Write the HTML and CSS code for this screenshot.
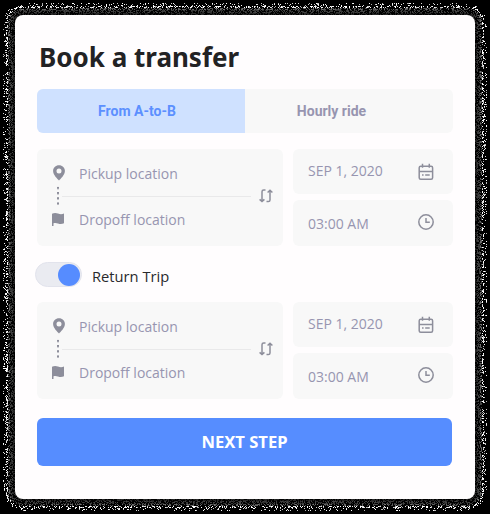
FILE: index.html
```html
<!DOCTYPE html>
<html lang="en">
<head>
<meta charset="utf-8">
<title>Book a transfer</title>
<link rel="stylesheet" href="styles.css">
</head>
<body>
<canvas class="grain" width="490" height="514"></canvas>
<svg class="sprite" aria-hidden="true">
  <symbol id="pin" viewBox="0 0 12 16"><path fill-rule="evenodd" d="M6 .2C2.600.2.1 2.700.1 6c0 3.900 4.400 8 5.900 9.400C7.500 14 11.900 9.900 11.900 6 11.900 2.700 9.400.2 6 .2zM6 3.400a2.500 2.500 0 1 1 0 5 2.500 2.500 0 0 1 0-5z"/></symbol>
  <symbol id="flag" viewBox="0 0 12 13"><path d="M0 .8C2.200-.2 4.200 0 6 .6c2 .7 4 .7 6 0v9.600c-2 .9-4 .9-6 .2-1.700-.6-3-.7-4.500-.2V13H0z"/></symbol>
  <symbol id="swap" viewBox="0 0 14 14"><path d="M6.500 1.100H4.700Q3 1.100 3 2.800v9.500M.6 10.400 3 12.600l2.400-2.200M7.500 12.600h1.800q1.700 0 1.700-1.700V1.500M8.600 3.500 11 1.200l2.400 2.300"/></symbol>
  <symbol id="calendar" viewBox="0 0 16 18"><rect x="1.200" y="3.200" width="13.400" height="13" rx="1.500"/><path d="M4.500.8v4M11.300.8v4M1.200 8.600h13.400M4 11.900h1.600M7.200 11.900h4.500"/></symbol>
  <symbol id="clock" viewBox="0 0 16 16"><circle cx="8" cy="8" r="7.200"/><path d="M8 4v4.300h3.800"/></symbol>
</svg>
<main class="card">
  <h1 class="title">Book a transfer</h1>
  <div class="tabs">
    <div class="tab tab-active">From A-to-B</div>
    <div class="tab">Hourly ride</div>
  </div>
  <section class="trip">
    <div class="route">
      <div class="stop"><svg class="pin"><use href="#pin"/></svg><span>Pickup location</span></div>
      <div class="between"><i class="dots"></i><i class="rule"></i><svg class="swap"><use href="#swap"/></svg></div>
      <div class="stop"><svg class="flag"><use href="#flag"/></svg><span>Dropoff location</span></div>
    </div>
    <div class="when">
      <div class="field date"><span>SEP 1, 2020</span><svg class="calendar"><use href="#calendar"/></svg></div>
      <div class="field time"><span>03:00 AM</span><svg class="clock"><use href="#clock"/></svg></div>
    </div>
  </section>
  <div class="return"><div class="switch"><i class="knob"></i></div><span>Return Trip</span></div>
  <section class="trip">
    <div class="route">
      <div class="stop"><svg class="pin"><use href="#pin"/></svg><span>Pickup location</span></div>
      <div class="between"><i class="dots"></i><i class="rule"></i><svg class="swap"><use href="#swap"/></svg></div>
      <div class="stop"><svg class="flag"><use href="#flag"/></svg><span>Dropoff location</span></div>
    </div>
    <div class="when">
      <div class="field date"><span>SEP 1, 2020</span><svg class="calendar"><use href="#calendar"/></svg></div>
      <div class="field time"><span>03:00 AM</span><svg class="clock"><use href="#clock"/></svg></div>
    </div>
  </section>
  <button class="next">NEXT STEP</button>
</main>
<script src="grain.js"></script>
</body>
</html>
```
FILE: styles.css
```css
* { box-sizing: border-box; }
body {
  margin: 0;
  width: 490px;
  height: 514px;
  padding: 15px;
  overflow: hidden;
  background: #000;
  font-family: "Open Sans", "Noto Sans", sans-serif;
  font-size: 14px;
  color: #9795b0;
}
.grain { position: absolute; left: 0; top: 0; }
.sprite { position: absolute; width: 0; height: 0; }
svg { display: block; flex: none; }
.card {
  position: relative;
  width: 460px;
  height: 484px;
  padding: 24px 22px 0;
  border-radius: 8px;
  background: #fffdfe;
}
.title {
  margin: 0 0 0 2px;
  height: 50px;
  font-family: "Noto Sans", sans-serif;
  font-size: 26px;
  line-height: 37px;
  font-weight: 700;
  color: #222224;
  white-space: nowrap;
}
.tabs {
  display: flex;
  width: 416px;
  height: 44px;
  border-radius: 6px;
  overflow: hidden;
  background: #f8f8f8;
}
.tab {
  width: 208px;
  padding-right: 8px;
  text-align: center;
  font: 700 14px/44px Roboto, sans-serif;
}
.tab + .tab { padding-right: 35px; }
.tab-active { background: #cfe1ff; color: #5c90ff; }
.trip { display: flex; gap: 10px; height: 97px; margin-top: 16px; }
.route {
  width: 246px;
  padding: 13px 11px 0 14px;
  border-radius: 6px;
  background: #f8f8f8;
}
.stop { display: flex; align-items: center; height: 22px; }
.stop svg { fill: #8d8e9b; }
.pin { width: 12px; height: 16px; margin: 0 14px 0 2px; }
.flag { width: 12px; height: 13px; margin: 0 15px 0 1px; }
.between { display: flex; align-items: center; height: 24px; }
.dots {
  width: 2px;
  height: 20px;
  margin-left: 6px;
  background: radial-gradient(circle at 1px 2px, #8d8e9b 1px, transparent 1.300px) 0 0 / 2px 5.200px;
}
.rule { width: 189px; height: 1px; margin: 0 8px 0 3px; background: #e9e9ea; }
.swap, .calendar, .clock { fill: none; stroke: #8d8e9b; stroke-width: 1.500; }
.dots, .swap, .rule { flex: none; }
.swap { width: 14px; height: 14px; }
.when { display: flex; flex-direction: column; gap: 6px; }
.field {
  display: flex;
  align-items: center;
  justify-content: space-between;
  width: 160px;
  height: 45px;
  padding: 0 19px 0 15px;
  border-radius: 6px;
  background: #f8f8f8;
}
.time { height: 46px; }
.date span { margin-top: -2px; }
.calendar { width: 16px; height: 18px; }
.clock { width: 16px; height: 16px; margin-top: -2px; }
.return {
  display: flex;
  align-items: center;
  gap: 10px;
  height: 25px;
  margin: 16px 0 -1px -2px;
  font-size: 14.700px;
  color: #29292c;
}
.return span { padding-top: 2px; }
.switch {
  display: flex;
  justify-content: flex-end;
  align-items: center;
  width: 47px;
  height: 25px;
  padding-right: 1px;
  border: 1px solid #e2e3ec;
  border-radius: 13px;
  background: #eaebf1;
}
.knob { width: 22px; height: 22px; border-radius: 50%; background: #568cff; }
.next {
  display: block;
  width: 415px;
  height: 48px;
  margin-top: 19px;
  padding: 0;
  border: 0;
  border-radius: 6px;
  background: #568dff;
  color: #fff;
  font: 700 16.600px/48px "Noto Sans", sans-serif;
}
```
FILE: grain.js
```js
// Speckled shadow around the card: dim near its edge, bright and sparse outside.
const canvas = document.querySelector('.grain');
const ctx = canvas.getContext('2d');
let seed = 71;
function random() {
  seed = (Math.imul(seed, 1664525) + 1013904223) >>> 0;
  return seed / 4294967296;
}
for (let y = 0; y < 514; y++) {
  for (let x = 0; x < 490; x++) {
    const dx = Math.max(23 - x, x - 466, 0);
    const dy = Math.max(23 - y, y - 490, 0);
    const d = Math.hypot(dx, dy) - 8;
    const r = random(), shade = random();
    if (d < 0 || d > 12) continue;
    const density = d < 7 ? 0.5 : d < 10 ? 0.38 : 0.14;
    if (r > density) continue;
    const base = d < 3 ? 35 : d < 6 ? 55 : d < 8 ? 90 : 240;
    const v = Math.min(255, Math.round(base * (0.7 + shade * 0.6)));
    ctx.fillStyle = `rgb(${v},${v},${v})`;
    ctx.fillRect(x, y, 1, 1);
  }
}
```
